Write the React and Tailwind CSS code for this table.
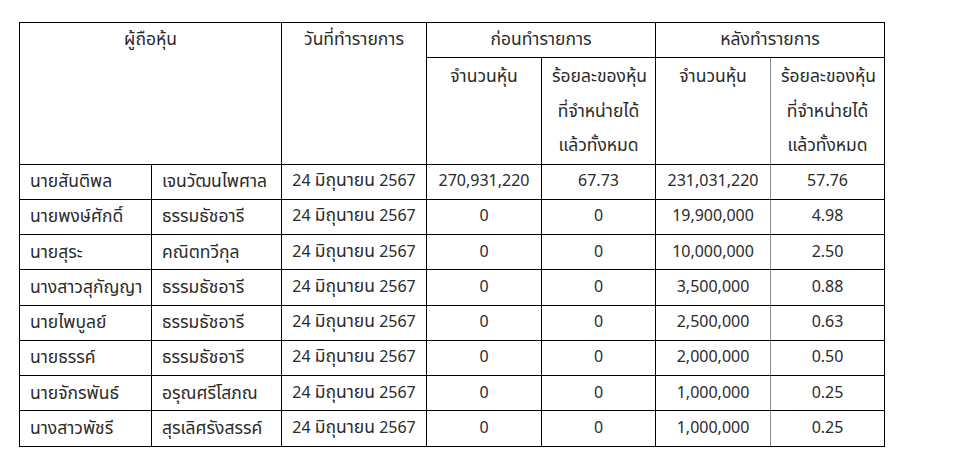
import React from "react";

const rows = [
  ["นายสันติพล", "เจนวัฒนไพศาล", "270,931,220", "67.73", "231,031,220", "57.76"],
  ["นายพงษ์ศักดิ์", "ธรรมธัชอารี", "0", "0", "19,900,000", "4.98"],
  ["นายสุระ", "คณิตทวีกุล", "0", "0", "10,000,000", "2.50"],
  ["นางสาวสุกัญญา", "ธรรมธัชอารี", "0", "0", "3,500,000", "0.88"],
  ["นายไพบูลย์", "ธรรมธัชอารี", "0", "0", "2,500,000", "0.63"],
  ["นายธรรค์", "ธรรมธัชอารี", "0", "0", "2,000,000", "0.50"],
  ["นายจักรพันธ์", "อรุณศรีโสภณ", "0", "0", "1,000,000", "0.25"],
  ["นางสาวพัชรี", "สุรเลิศรังสรรค์", "0", "0", "1,000,000", "0.25"],
];

const cell = "border border-black px-[10px] align-middle whitespace-nowrap";
const th = "text-[17.5px]";
const td = "border border-black px-[10px] align-middle whitespace-nowrap leading-[33px]";

export default function App() {
  return (
    <div
      className="w-[960px] h-[474px] bg-white pt-[22px] pl-[19px] text-[16px] leading-[34px] text-[#2b2b2b]"
      style={{ fontFamily: "Tahoma, 'Noto Sans Thai', 'Noto Sans', sans-serif" }}
    >
      <table className="table-fixed border-collapse w-[866px]">
        <colgroup>
          <col className="w-[132px]" />
          <col className="w-[130px]" />
          <col className="w-[145px]" />
          <col className="w-[115px]" />
          <col className="w-[114px]" />
          <col className="w-[115px]" />
          <col className="w-[114px]" />
        </colgroup>
        <thead>
          <tr className="h-[35px]">
            <th colSpan={2} rowSpan={2} className={`${cell} ${th} font-normal text-center align-top`}>
              ผู้ถือหุ้น
            </th>
            <th rowSpan={2} className={`${cell} ${th} font-normal text-center align-top`}>
              วันที่ทำรายการ
            </th>
            <th colSpan={2} className={`${cell} ${th} font-normal text-center`}>
              ก่อนทำรายการ
            </th>
            <th colSpan={2} className={`${cell} ${th} font-normal text-center`}>
              หลังทำรายการ
            </th>
          </tr>
          <tr className="h-[105px]">
            <th className={`${cell} ${th} font-normal text-center align-top pt-[2px]`}>จำนวนหุ้น</th>
            <th className={`${cell} ${th} font-normal text-center align-top px-0 pt-[2px] leading-[34.5px]`}>
              ร้อยละของหุ้น
              <br />
              ที่จำหน่ายได้
              <br />
              แล้วทั้งหมด
            </th>
            <th className={`${cell} ${th} font-normal text-center align-top pt-[2px] border-r-[#8a8a8a]`}>
              จำนวนหุ้น
            </th>
            <th className={`${cell} ${th} font-normal text-center align-top px-0 pt-[2px] leading-[34.5px]`}>
              ร้อยละของหุ้น
              <br />
              ที่จำหน่ายได้
              <br />
              แล้วทั้งหมด
            </th>
          </tr>
        </thead>
        <tbody>
          {rows.map((r, i) => (
            <tr key={i} className="h-[35.25px]">
              <td className={`${td} ${th} text-left`}>{r[0]}</td>
              <td className={`${td} ${th} text-left`}>{r[1]}</td>
              <td className={`${td} text-center`}>
                24 <span className="text-[17.5px] leading-none">มิถุนายน</span> 2567
              </td>
              <td className={`${td} text-center`}>{r[2]}</td>
              <td className={`${td} text-center`}>{r[3]}</td>
              <td className={`${td} text-center border-r-[#8a8a8a]`}>{r[4]}</td>
              <td className={`${td} text-center`}>{r[5]}</td>
            </tr>
          ))}
        </tbody>
      </table>
    </div>
  );
}
